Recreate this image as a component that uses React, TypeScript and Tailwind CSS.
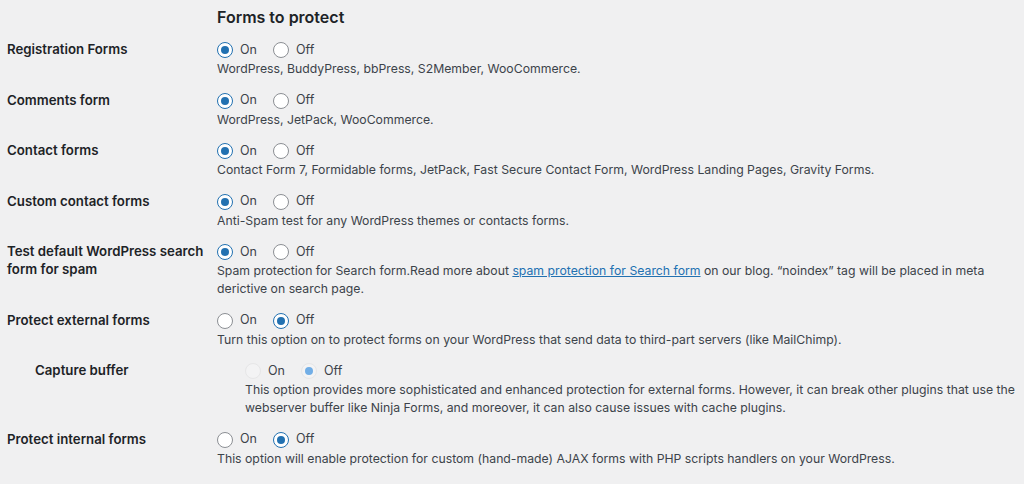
import React from "react";

type Row = {
  label: string;
  value: "on" | "off";
  desc: React.ReactNode;
  sub?: boolean;
};

const rows: Row[] = [
  {
    label: "Registration Forms",
    value: "on",
    desc: "WordPress, BuddyPress, bbPress, S2Member, WooCommerce.",
  },
  {
    label: "Comments form",
    value: "on",
    desc: "WordPress, JetPack, WooCommerce.",
  },
  {
    label: "Contact forms",
    value: "on",
    desc: "Contact Form 7, Formidable forms, JetPack, Fast Secure Contact Form, WordPress Landing Pages, Gravity Forms.",
  },
  {
    label: "Custom contact forms",
    value: "on",
    desc: "Anti-Spam test for any WordPress themes or contacts forms.",
  },
  {
    label: "Test default WordPress search form for spam",
    value: "on",
    desc: (
      <>
        Spam protection for Search form.Read more about{" "}
        <a href="#" className="text-[#2271b1] underline">
          spam protection for Search form
        </a>{" "}
        on our blog. “noindex” tag will be placed in meta derictive on search
        page.
      </>
    ),
  },
  {
    label: "Protect external forms",
    value: "off",
    desc: "Turn this option on to protect forms on your WordPress that send data to third-part servers (like MailChimp).",
  },
  {
    label: "Capture buffer",
    value: "off",
    sub: true,
    desc: "This option provides more sophisticated and enhanced protection for external forms. However, it can break other plugins that use the webserver buffer like Ninja Forms, and moreover, it can also cause issues with cache plugins.",
  },
  {
    label: "Protect internal forms",
    value: "off",
    desc: "This option will enable protection for custom (hand-made) AJAX forms with PHP scripts handlers on your WordPress.",
  },
];

function Radio({ checked, disabled }: { checked: boolean; disabled?: boolean }) {
  if (disabled) {
    return (
      <span className="flex h-4 w-4 shrink-0 items-center justify-center rounded-full border border-[#e6e6e7] bg-[#f3f3f4]">
        {checked && <span className="h-2 w-2 rounded-full bg-[#72aee6]" />}
      </span>
    );
  }
  return (
    <span
      className={
        checked
          ? "flex h-4 w-4 shrink-0 items-center justify-center rounded-full border border-[#2271b1] bg-white"
          : "flex h-4 w-4 shrink-0 items-center justify-center rounded-full border border-[#8c8f94] bg-white"
      }
    >
      {checked && <span className="h-2 w-2 rounded-full bg-[#2271b1]" />}
    </span>
  );
}

function Toggle({ value, disabled }: { value: "on" | "off"; disabled?: boolean }) {
  return (
    <div className="flex h-5 items-center text-[12.5px] text-[#3c434a]">
      <label className="flex items-center gap-[7px]">
        <Radio checked={value === "on"} disabled={disabled} />
        <span>On</span>
      </label>
      <label className="ml-[16px] flex items-center gap-[7px]">
        <Radio checked={value === "off"} disabled={disabled} />
        <span>Off</span>
      </label>
    </div>
  );
}

export default function App() {
  return (
    <div
      className="h-[484px] overflow-hidden bg-[#f0f0f1] pl-[7px]"
      style={{ fontFamily: "Inter, 'Noto Sans', sans-serif" }}
    >
      <h2 className="ml-[210px] flex h-[40px] items-center pb-[6px] text-[16px] font-semibold text-[#1d2327]">
        Forms to protect
      </h2>
      {rows.map((row) => (
        <div key={row.label} className="flex pb-[12.5px]">
          <div
            className={
              row.sub
                ? "w-[210px] shrink-0 pl-[28px] pr-[8px] text-[13.25px] font-semibold leading-[18px] text-[#1d2327]"
                : "w-[210px] shrink-0 pr-[8px] text-[13.25px] font-semibold leading-[18px] text-[#1d2327]"
            }
          >
            {row.label}
          </div>
          <div className={row.sub ? "flex-1 pl-[28px] pr-[8px]" : "flex-1 pr-[8px]"}>
            <Toggle value={row.value} disabled={row.sub} />
            <p className="text-[12.25px] leading-[18px] text-[#3c434a]">{row.desc}</p>
          </div>
        </div>
      ))}
      <div className="flex">
        <div className="w-[210px] shrink-0" />
        <p className="pt-[10px] text-[12.25px] leading-[18px] text-[#3c434a]">WooCommerce</p>
      </div>
    </div>
  );
}
